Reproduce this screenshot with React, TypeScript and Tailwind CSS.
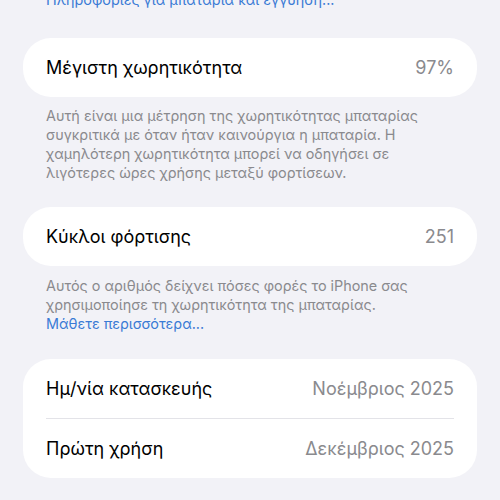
import React from 'react';

const font = { fontFamily: 'Inter, "Noto Sans", sans-serif' };

const Row: React.FC<{ label: string; value: string }> = ({ label, value }) => (
  <div className="flex h-[59px] items-center justify-between px-[23px]">
    <span className="text-[18px] text-black">{label}</span>
    <span className="text-[18px] text-[#8a8a8e]">{value}</span>
  </div>
);

const App: React.FC = () => {
  return (
    <div className="h-[500px] w-[500px] overflow-hidden bg-[#f2f2f7] px-[23px]" style={font}>
      {/* cut-off link from the section above */}
      <p className="-mt-[10px] px-[23px] text-[14.4px] leading-[19px] text-[#3a7bd5]">
        Πληροφορίες για μπαταρία και εγγύηση...
      </p>

      {/* Maximum capacity */}
      <div className="mt-[29px] rounded-[28px] bg-white">
        <Row label="Μέγιστη χωρητικότητα" value="97%" />
      </div>
      <p className="px-[23px] pt-[9px] text-[14.4px] leading-[19px] text-[#8a8a8e]">
        Αυτή είναι μια μέτρηση της χωρητικότητας μπαταρίας συγκριτικά με όταν ήταν καινούργια η
        μπαταρία. Η χαμηλότερη χωρητικότητα μπορεί να οδηγήσει σε λιγότερες ώρες χρήσης μεταξύ
        φορτίσεων.
      </p>

      {/* Cycle count */}
      <div className="mt-[25px] rounded-[28px] bg-white">
        <Row label="Κύκλοι φόρτισης" value="251" />
      </div>
      <p className="px-[23px] pt-[10px] text-[14.4px] leading-[19px] text-[#8a8a8e]">
        Αυτός ο αριθμός δείχνει πόσες φορές το iPhone σας χρησιμοποίησε τη χωρητικότητα της
        μπαταρίας.
        <br />
        <span className="text-[#3a7bd5]">Μάθετε περισσότερα...</span>
      </p>

      {/* Dates */}
      <div className="mt-[26px] rounded-[28px] bg-white">
        <Row label="Ημ/νία κατασκευής" value="Νοέμβριος 2025" />
        <div className="mx-[23px] h-px bg-[#e3e3e8]" />
        <Row label="Πρώτη χρήση" value="Δεκέμβριος 2025" />
      </div>
    </div>
  );
};

export default App;
